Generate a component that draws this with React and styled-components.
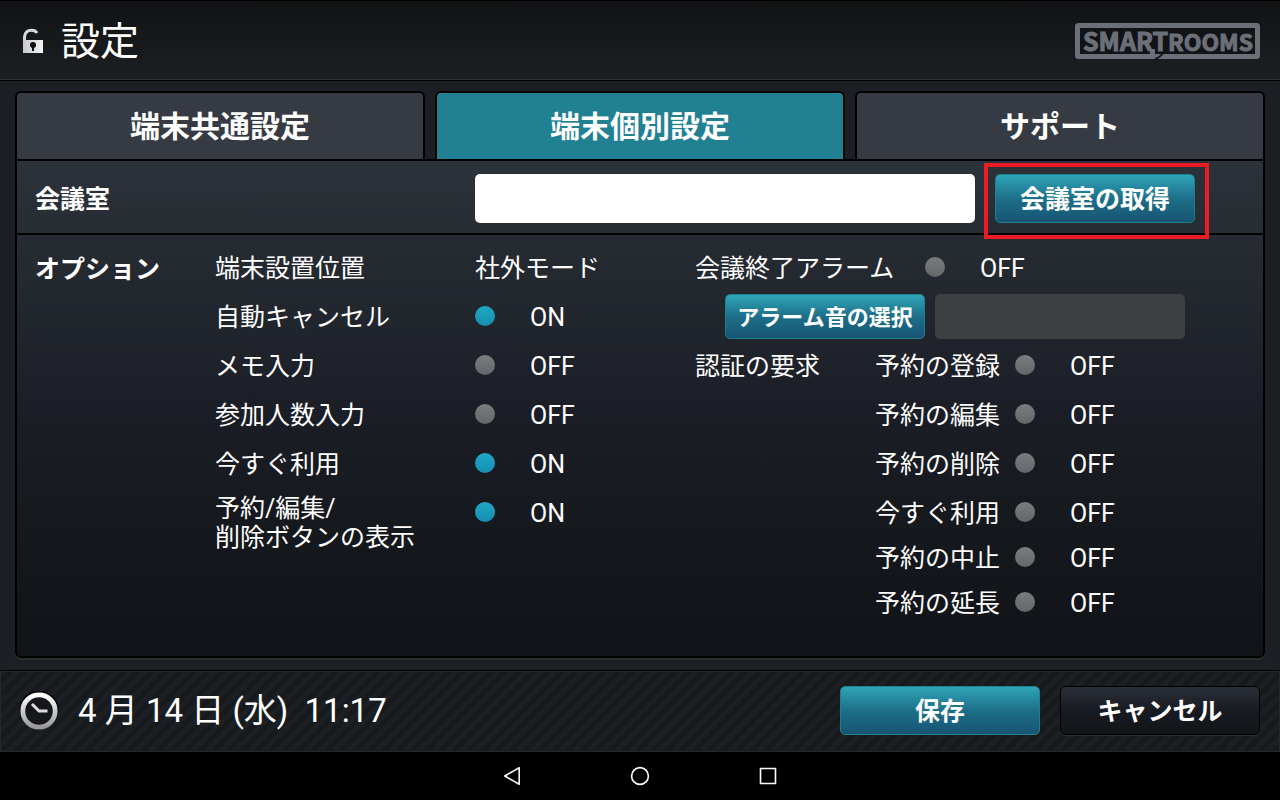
import React, { useState } from "react";
import styled, { createGlobalStyle, css } from "styled-components";

const GlobalStyle = createGlobalStyle`
  *, *::before, *::after {
    box-sizing: border-box;
  }
  body {
    margin: 0;
    background: #000;
    color: #fff;
    font-family: Roboto, "Noto Sans CJK JP", sans-serif;
    font-size: 25px;
    line-height: 29px;
  }
  button, input {
    font-family: inherit;
  }
`;

const Page = styled.div`
  min-height: 100vh;
  display: flex;
  flex-direction: column;
  background: #1c1f24;
`;

const HeaderStyle = styled.header`
  height: 81px;
  display: flex;
  align-items: center;
  justify-content: space-between;
  padding: 0 20px 0 22px;
  border-top: 1px solid #000;
  border-bottom: 1px solid #000;
  background: linear-gradient(#101214, #1d2023);
  box-shadow: inset 0 -1px #2f3337;
`;

const TitleStyle = styled.div`
  display: flex;
  align-items: center;
  gap: 16px;
  h1 {
    margin: 0;
    padding-top: 2px;
    font-size: 39px;
    line-height: 48px;
    font-weight: 400;
  }
`;

const MainStyle = styled.main`
  flex: 1;
  display: flex;
  flex-direction: column;
  padding: 10px 15px 12px;
`;

const TabsStyle = styled.div`
  display: grid;
  grid-template-columns: repeat(3, 1fr);
  gap: 10px;
`;

const TabStyle = styled.button`
  height: 68px;
  padding: 2px 0 0;
  border: 2px solid #000;
  border-bottom: none;
  border-radius: 6px 6px 0 0;
  background: ${(props) => (props.$active ? "#228093" : "#363b43")};
  color: #fff;
  font-size: 30px;
  line-height: 36px;
  font-weight: 700;
`;

const PanelStyle = styled.section`
  flex: 1;
  border: 2px solid #000;
  border-radius: 0 0 6px 6px;
  background: linear-gradient(#2c3239, #1b1e26 50%, #15181c 75%, #101418);
  box-shadow: 0 2px #2d2f33;
`;

const RoomRowStyle = styled.div`
  height: 74px;
  display: grid;
  grid-template-columns: 440px minmax(0, 500px) 200px;
  align-items: center;
  padding: 2px 18px 0;
  border-bottom: 2px solid #000;
  > label {
    padding-top: 2px;
    font-weight: 700;
  }
`;

const RoomInput = styled.input`
  width: 100%;
  height: 49px;
  padding: 0 12px;
  border: none;
  border-radius: 5px;
  background: #fff;
  color: #000;
  font-size: 25px;
`;

const HighlightStyle = styled.div`
  position: relative;
  margin-left: 20px;
  width: 200px;
  &::after {
    content: "";
    position: absolute;
    inset: -11px -14px -16px -11px;
    border: 4px solid #ed1c24;
    pointer-events: none;
  }
`;

const darkButton = css`
  border-color: #000;
  background: linear-gradient(#2a2f37, #191b22 50%, #111418);
  box-shadow: 0 1px #2d2f33;
`;

const ActionButton = styled.button`
  display: block;
  width: 200px;
  height: ${(props) => (props.$small ? "45px" : "49px")};
  padding: 2px 0 0;
  border: 1px solid #1f7f8c;
  border-radius: 5px;
  background: linear-gradient(#2fa5b8, #1d6f89 50%, #175472);
  color: #fff;
  font-size: ${(props) => (props.$small ? "22px" : "25px")};
  line-height: 29px;
  font-weight: 700;
  ${(props) => props.$dark && darkButton}
`;

const OptionsStyle = styled.div`
  display: grid;
  grid-template-columns: 180px 480px 1fr;
  padding: 10px 18px;
  > h2 {
    margin: 10px 0 0;
    font-size: 25px;
    line-height: 29px;
    font-weight: 700;
  }
`;

const ColumnStyle = styled.div`
  display: flex;
  flex-direction: column;
  gap: 4px;
`;

const OptionRowStyle = styled.div`
  min-height: 45px;
  display: grid;
  grid-template-columns: ${(props) => props.$columns};
  align-items: start;
  > span, > label {
    padding: 9px 0 7px;
  }
  > .two-lines {
    padding: 4px 0;
  }
`;

const AlarmSoundStyle = styled.div`
  display: flex;
  gap: 10px;
  padding-left: 30px;
`;

const AlarmInput = styled.input`
  flex: 0 1 250px;
  min-width: 0;
  height: 45px;
  padding: 0 12px;
  border: none;
  border-radius: 5px;
  background: #3e4044;
  color: #fff;
  font-size: 25px;
`;

const AuthStyle = styled.div`
  display: grid;
  grid-template-columns: 180px 1fr;
  > span {
    padding: 9px 0 7px;
  }
`;

const SwitchStyle = styled.span`
  height: 43px;
  display: flex;
  align-items: center;
  gap: 35px;
  && {
    padding: 0;
  }
  span {
    padding-top: 4px;
  }
  input {
    appearance: none;
    width: 20px;
    height: 20px;
    margin: 0;
    border-radius: 50%;
    background: linear-gradient(#7b7c80, #656669);
  }
  input:checked {
    background: linear-gradient(#1fa8c2, #168fb2);
  }
`;

const FooterStyle = styled.footer`
  height: 82px;
  display: flex;
  align-items: center;
  gap: 20px;
  padding: 0 19px 2px 18px;
  border: 1px solid #25282b;
  border-top-color: #000;
  box-shadow: inset 0 1px #25282b, inset 0 -1px #1c1f22;
  background: repeating-linear-gradient(
    135deg,
    #1c1f23 0,
    #1c1f23 4px,
    #171a1d 5px,
    #171a1d 9px,
    #1c1f23 10px
  );
`;

const ClockStyle = styled.div`
  flex: 1;
  display: flex;
  align-items: center;
  gap: 19px;
  padding-top: 2px;
  font-size: 33px;
  line-height: 44px;
  white-space: pre;
`;

const NavStyle = styled.nav`
  height: 48px;
  display: flex;
  justify-content: center;
  gap: 80px;
  background: #000;
  button {
    width: 48px;
    padding: 0;
    border: none;
    background: none;
  }
  svg {
    display: block;
    margin: auto;
  }
`;

const LockIcon = () => (
  <svg width="23" height="26" viewBox="0 0 23 26">
    <defs>
      <linearGradient id="lockFill" x1="0" x2="1">
        <stop offset="0" stopColor="#c8c8c8" />
        <stop offset="1" stopColor="#f4f4f4" />
      </linearGradient>
    </defs>
    <path d="M2.500 12V9C3 4.500 6 2.300 9.500 2.300c2.500 0 4.500 1 5.500 2.700" fill="none" stroke="#d8d8d8" strokeWidth="3" />
    <path d="M1 12h20v13H1z" fill="url(#lockFill)" />
    <circle cx="11" cy="17" r="3" fill="#0c0d0f" />
    <path d="M10 17h2v6h-2z" fill="#0c0d0f" />
  </svg>
);

const Logo = () => (
  <svg width="185" height="36" viewBox="0 0 185 36" role="img" aria-label="SMART ROOMS">
    <rect x="2.500" y="2.500" width="180" height="31" rx="1" fill="#111317" stroke="#6b7078" strokeWidth="5" />
    <g
      fill="#6b7078"
      stroke="#6b7078"
      strokeWidth="1"
      fontFamily="'Noto Sans CJK JP', sans-serif"
      fontWeight="700"
    >
      <text x="8" y="28" fontSize="25">SMART</text>
      <text x="93" y="28" fontSize="23">ROOMS</text>
    </g>
    <path d="M75 26h5v3c0 4-2 6-6 7h-5c4-1 6-3 6-7z" fill="#6b7078" />
    <path d="M80 36c4-1 7-4 10-8" fill="none" stroke="#111317" strokeWidth="2" />
  </svg>
);

const ClockIcon = () => (
  <svg width="40" height="40" viewBox="0 0 40 40">
    <defs>
      <linearGradient id="clockRing" x1="0" y1="0" x2="0" y2="1">
        <stop offset="0" stopColor="#fff" />
        <stop offset="1" stopColor="#999" />
      </linearGradient>
    </defs>
    <circle cx="20" cy="19" r="17" fill="none" stroke="#000" strokeWidth="5" />
    <circle cx="20" cy="20" r="16.200" fill="#15171a" stroke="url(#clockRing)" strokeWidth="4.800" />
    <path d="M13 13l7 7h8.500" fill="none" stroke="#ddd" strokeWidth="3" />
  </svg>
);

const Switch = ({ id, defaultOn = false }) => {
  const [on, setOn] = useState(defaultOn);

  return (
    <SwitchStyle>
      <input type="checkbox" id={id} checked={on} onChange={() => setOn(!on)} />
      <span>{on ? "ON" : "OFF"}</span>
    </SwitchStyle>
  );
};

const tabs = ["端末共通設定", "端末個別設定", "サポート"];

const options = [
  { id: "autoCancel", name: "自動キャンセル", on: true },
  { id: "memo", name: "メモ入力", on: false },
  { id: "members", name: "参加人数入力", on: false },
  { id: "useNow", name: "今すぐ利用", on: true },
];

const authOptions = [
  { id: "authCreate", name: "予約の登録" },
  { id: "authEdit", name: "予約の編集" },
  { id: "authDelete", name: "予約の削除" },
  { id: "authUseNow", name: "今すぐ利用" },
];

const authExtraOptions = [
  { id: "authStop", name: "予約の中止" },
  { id: "authExtend", name: "予約の延長" },
];

const AuthRow = ({ option }) => (
  <OptionRowStyle $columns="140px 1fr">
    <label htmlFor={option.id}>{option.name}</label>
    <Switch id={option.id} />
  </OptionRowStyle>
);

export default function App() {
  const [activeTab, setActiveTab] = useState(tabs[1]);

  return (
    <Page>
      <GlobalStyle />
      <HeaderStyle>
        <TitleStyle>
          <LockIcon />
          <h1>設定</h1>
        </TitleStyle>
        <Logo />
      </HeaderStyle>
      <MainStyle>
        <TabsStyle>
          {tabs.map((tab) => (
            <TabStyle type="button" key={tab} $active={tab === activeTab} onClick={() => setActiveTab(tab)}>
              {tab}
            </TabStyle>
          ))}
        </TabsStyle>
        <PanelStyle>
          <RoomRowStyle>
            <label htmlFor="room">会議室</label>
            <RoomInput id="room" type="text" />
            <HighlightStyle>
              <ActionButton type="button">会議室の取得</ActionButton>
            </HighlightStyle>
          </RoomRowStyle>
          <OptionsStyle>
            <h2>オプション</h2>
            <ColumnStyle>
              <OptionRowStyle $columns="260px 1fr">
                <span>端末設置位置</span>
                <span>社外モード</span>
              </OptionRowStyle>
              {options.map((option) => (
                <OptionRowStyle $columns="260px 1fr" key={option.id}>
                  <label htmlFor={option.id}>{option.name}</label>
                  <Switch id={option.id} defaultOn={option.on} />
                </OptionRowStyle>
              ))}
              <OptionRowStyle $columns="260px 1fr">
                <label htmlFor="showButtons" className="two-lines">
                  予約/編集/
                  <br />
                  削除ボタンの表示
                </label>
                <Switch id="showButtons" defaultOn />
              </OptionRowStyle>
            </ColumnStyle>
            <ColumnStyle>
              <OptionRowStyle $columns="230px 1fr">
                <label htmlFor="endAlarm">会議終了アラーム</label>
                <Switch id="endAlarm" />
              </OptionRowStyle>
              <AlarmSoundStyle>
                <ActionButton type="button" $small>アラーム音の選択</ActionButton>
                <AlarmInput type="text" aria-label="アラーム音" readOnly />
              </AlarmSoundStyle>
              <AuthStyle>
                <span>認証の要求</span>
                <div>
                  <ColumnStyle>
                    {authOptions.map((option) => (
                      <AuthRow option={option} key={option.id} />
                    ))}
                  </ColumnStyle>
                  {authExtraOptions.map((option) => (
                    <AuthRow option={option} key={option.id} />
                  ))}
                </div>
              </AuthStyle>
            </ColumnStyle>
          </OptionsStyle>
        </PanelStyle>
      </MainStyle>
      <FooterStyle>
        <ClockStyle>
          <ClockIcon />
          <time>4 月 14 日 (水)  11:17</time>
        </ClockStyle>
        <ActionButton type="button">保存</ActionButton>
        <ActionButton type="button" $dark>キャンセル</ActionButton>
      </FooterStyle>
      <NavStyle>
        <button type="button" aria-label="戻る">
          <svg width="20" height="20" viewBox="0 0 20 20" fill="none" stroke="#fff" strokeWidth="1.600" strokeLinejoin="round">
            <path d="M17.200 1.800v16.400L2.800 10z" />
          </svg>
        </button>
        <button type="button" aria-label="ホーム">
          <svg width="20" height="20" viewBox="0 0 20 20" fill="none" stroke="#fff" strokeWidth="1.600">
            <circle cx="10" cy="10" r="8.400" />
          </svg>
        </button>
        <button type="button" aria-label="履歴">
          <svg width="20" height="20" viewBox="0 0 20 20" fill="none" stroke="#fff" strokeWidth="1.600" strokeLinejoin="round">
            <path d="M2.500 2.500h15v15h-15z" />
          </svg>
        </button>
      </NavStyle>
    </Page>
  );
}
